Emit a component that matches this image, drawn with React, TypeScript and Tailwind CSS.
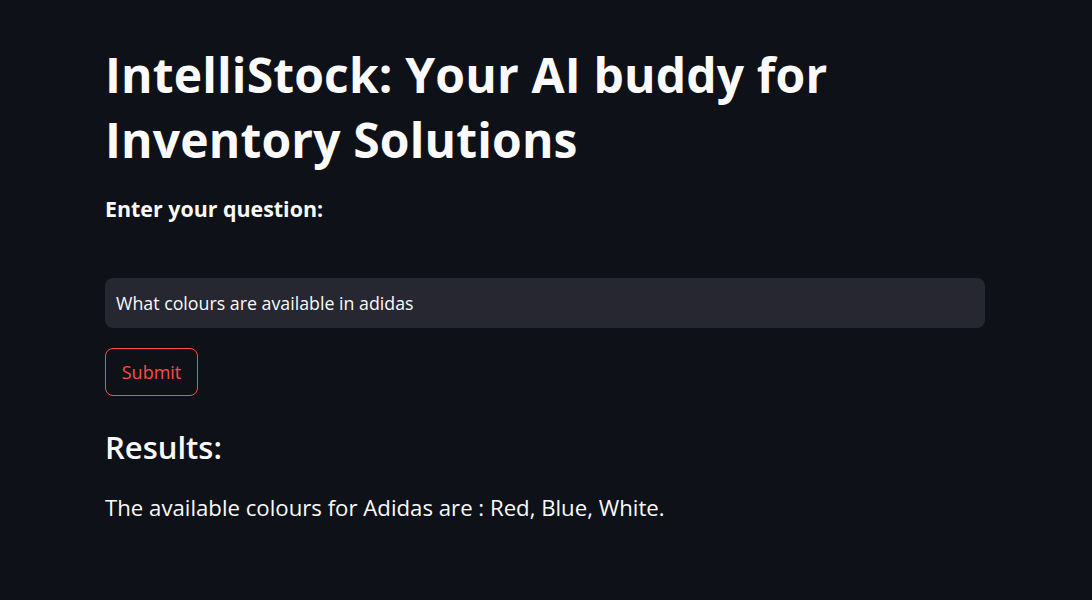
export default function App() {
  return (
    <div className="min-h-screen w-full bg-[#0e1117] text-[#fafafa] font-['Open_Sans','Liberation_Sans',sans-serif]">
      <main className="w-[880px] ml-[105px] pt-[42px]">
        <h1 className="w-[760px] text-[48px] leading-[65px] font-bold tracking-[0.15px]">
          IntelliStock: Your AI buddy for Inventory Solutions
        </h1>
        <p className="mt-[22px] text-[21.4px] leading-[30px] font-bold">Enter your question:</p>
        <div className="mt-[54px] h-[50px] rounded-[8px] bg-[#262730] flex items-center px-[11px] text-[17.8px]">
          What colours are available in adidas
        </div>
        <button className="mt-[20px] h-[48px] w-[93px] rounded-[8px] border border-[#ff4b4b] text-[#ff4b4b] text-[18px] flex items-center justify-center">
          Submit
        </button>
        <h3 className="mt-[31px] text-[31px] leading-[40px] font-semibold">Results:</h3>
        <p className="mt-[24px] text-[22.2px] leading-[34px]">
          The available colours for Adidas are : Red, Blue, White.
        </p>
      </main>
    </div>
  );
}
